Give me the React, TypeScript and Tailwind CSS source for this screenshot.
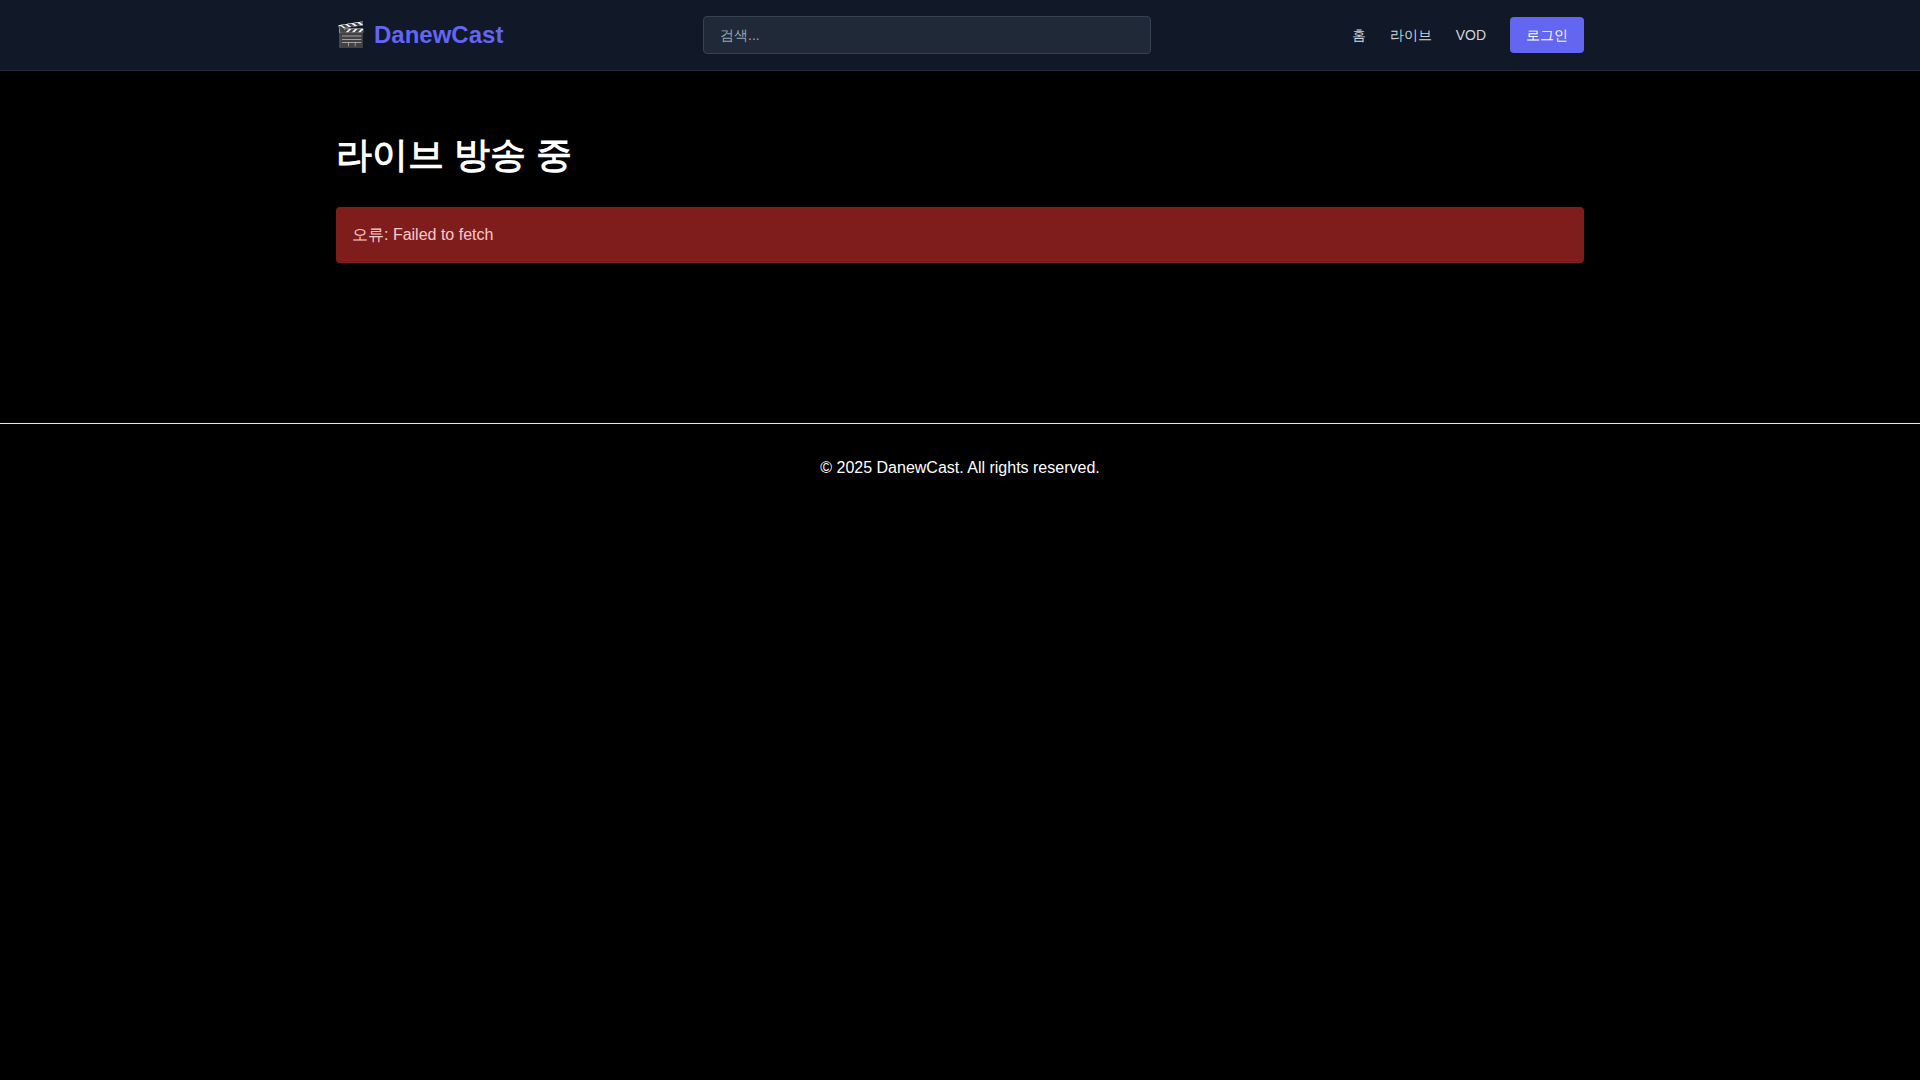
export default function App() {
  return (
    <div className="min-h-screen bg-black text-white font-['Liberation_Sans',sans-serif]">
      <header className="h-[71px] border-b border-[#1f2937] bg-[#111827]">
        <div className="mx-auto flex h-[70px] max-w-[1280px] items-center justify-between px-4">
          <a className="-mr-px flex items-center gap-2 text-2xl font-bold text-[#6366f1]">
            <span>🎬</span>
            <span>DanewCast</span>
          </a>
          <input
            placeholder="검색..."
            className="h-[38px] w-[448px] rounded border border-[#374151] bg-[#1f2937] px-4 text-sm text-white placeholder:text-[#9ca3af]"
          />
          <nav className="flex items-center gap-6 text-sm text-[#d1d5db]">
            <a>홈</a>
            <a>라이브</a>
            <a>VOD</a>
            <button className="h-9 rounded bg-[#6366f1] px-4 text-sm text-white">로그인</button>
          </nav>
        </div>
      </header>
      <main className="mx-auto max-w-[1280px] px-4 py-16">
        <h1 className="mb-8 text-4xl font-bold">라이브 방송 중</h1>
        <div className="rounded bg-[#7f1d1d] p-4 text-[#fecaca]">오류: Failed to fetch</div>
      </main>
      <footer className="mt-24 border-t border-[#e5e7eb] py-8 text-center text-white">
        © 2025 DanewCast. All rights reserved.
      </footer>
    </div>
  );
}
